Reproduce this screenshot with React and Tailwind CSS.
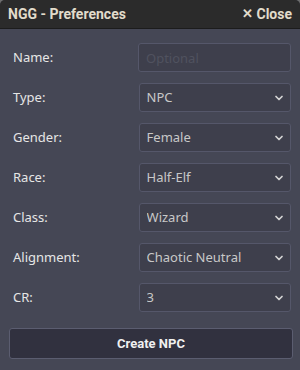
import { ChevronDown } from "lucide-react";

const fields = [
    { label: 'Name:', type: 'input', placeholder: 'Optional' },
    { label: 'Type:', value: 'NPC' },
    { label: 'Gender:', value: 'Female' },
    { label: 'Race:', value: 'Half-Elf' },
    { label: 'Class:', value: 'Wizard' },
    { label: 'Alignment:', value: 'Chaotic Neutral' },
    { label: 'CR:', value: '3' },
]

const Row = ({ field }) => {
    return (
        <div className="flex items-center h-[29px]">
            <label className="w-[130px] pl-[4px] text-[13px] text-[#e6e6e6]">{field.label}</label>
            {field.type === 'input' ? (
                <input
                    placeholder={field.placeholder}
                    className="w-[153px] h-[29px] rounded-[3px] border border-[#55576a] bg-[#3e3f4c] px-[7px] text-[13px] text-[#cfcfcf] placeholder:text-[#50525f] outline-none"
                />
            ) : (
                <div className="relative w-[153px] h-[29px]">
                    <select
                        defaultValue={field.value}
                        className="appearance-none w-full h-full rounded-[3px] border border-[#55576a] bg-[#3e3f4c] pl-[7px] text-[13px] text-[#c8c8c8] outline-none"
                    >
                        <option>{field.value}</option>
                    </select>
                    <ChevronDown size={12} strokeWidth={3.5} className="absolute right-[6px] top-[9px] text-[#d4d4d4] pointer-events-none" />
                </div>
            )}
        </div>
    )
}

const App = () => {
    return (
        <div className="w-[300px] h-[370px] bg-[#6e6e6e] font-['Noto_Sans',sans-serif]">
            <div className="w-full h-full rounded-t-[5px] overflow-hidden flex flex-col bg-[#454755]">
                <div className="h-[29px] shrink-0 flex items-center justify-between px-[8px] bg-[#2b2b2b] border-b border-[#1c1c1c] font-['Roboto',sans-serif]">
                    <span className="text-[14px] font-bold text-[#e2dccb]">NGG - Preferences</span>
                    <span className="flex items-center gap-[3px] text-[14px] font-bold text-[#e2dccb]">
                        <span className="text-[13px]">✕</span>Close
                    </span>
                </div>
                <div className="flex-1 flex flex-col px-[9px] pt-[14px]">
                    <div className="flex flex-col gap-[11px]">
                        {fields.map(f => <Row key={f.label} field={f} />)}
                    </div>
                    <button className="mt-[16px] h-[31px] w-[284px] rounded-[3px] border border-[#5b5d70] bg-[#31313f] font-['Roboto',sans-serif] text-[13px] font-bold text-[#f0f0f0]">
                        Create NPC
                    </button>
                </div>
            </div>
        </div>
    )
}

export default App;
